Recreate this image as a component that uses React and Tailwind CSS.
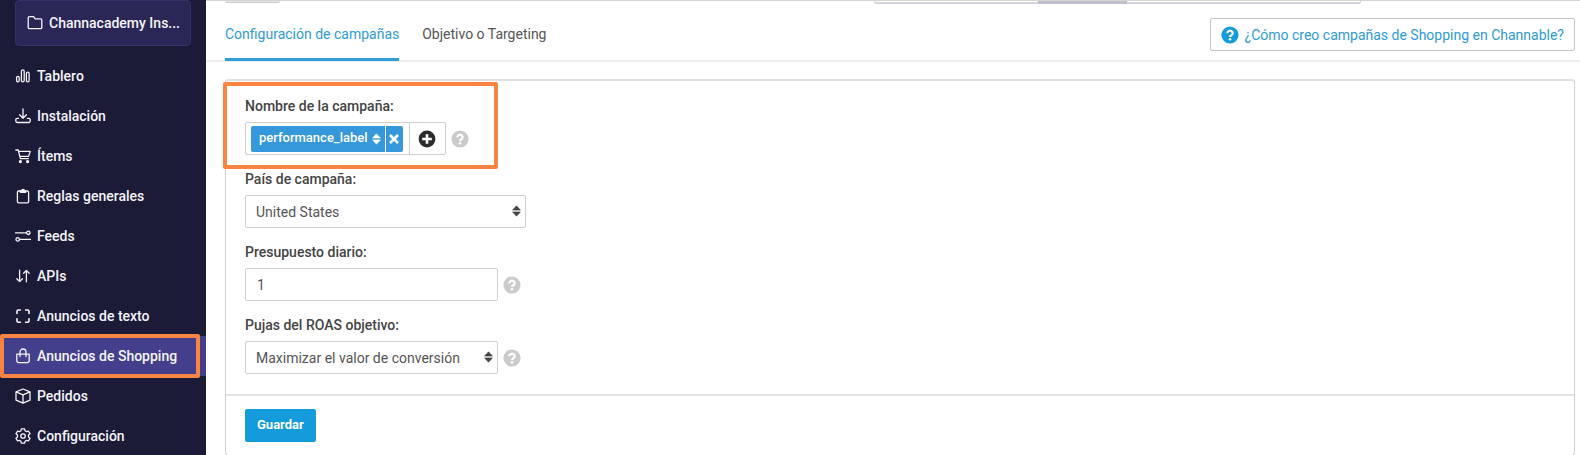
import React, { useState } from 'react';

const NAV = [
    { id: 'tablero',   name: 'Tablero',             icon: 'bars' },
    { id: 'instalar',  name: 'Instalación',         icon: 'download' },
    { id: 'items',     name: 'Ítems',               icon: 'cart' },
    { id: 'reglas',    name: 'Reglas generales',    icon: 'clipboard' },
    { id: 'feeds',     name: 'Feeds',               icon: 'sliders' },
    { id: 'apis',      name: 'APIs',                icon: 'arrows' },
    { id: 'texto',     name: 'Anuncios de texto',   icon: 'frame' },
    { id: 'shopping',  name: 'Anuncios de Shopping',icon: 'bag' },
    { id: 'pedidos',   name: 'Pedidos',             icon: 'box' },
    { id: 'config',    name: 'Configuración',       icon: 'gear' },
];

const PATHS = {
    folder: <path d="M1.2 3v9.400a1.300 1.300 0 0 0 1.300 1.300h11a1.300 1.300 0 0 0 1.300-1.300V5.200a1.300 1.300 0 0 0-1.300-1.300H8.200L6.600 1.700H2.500A1.300 1.300 0 0 0 1.200 3z" />,
    bars: (
        <>
            <rect x="1.6" y="8.3" width="2.6" height="5.6" rx="1.3" />
            <rect x="6.4" y="1.8" width="2.8" height="12.1" rx="1.4" />
            <rect x="11.4" y="4.2" width="2.7" height="9.7" rx="1.3" />
        </>
    ),
    download: (
        <>
            <path d="M8 1v9M4.6 6.8 8 10.2l3.4-3.4" />
            <path d="M3.6 10.4H2.2a1.4 1.4 0 0 0-1.4 1.4v1.3a1.4 1.4 0 0 0 1.4 1.4h11.6a1.4 1.4 0 0 0 1.4-1.4v-1.3a1.4 1.4 0 0 0-1.4-1.4h-1.4" />
        </>
    ),
    cart: (
        <>
            <path d="M.8 2h2.4l2.2 8.6h8M3.6 3.4h11.6l-1.6 5H4.9" />
            <circle cx="5.4" cy="13.6" r="1" fill="currentColor" />
            <circle cx="12.6" cy="13.6" r="1" fill="currentColor" />
        </>
    ),
    clipboard: (
        <>
            <path d="M5.4 3H3.6a1.2 1.2 0 0 0-1.2 1.2v9.4a1.2 1.2 0 0 0 1.2 1.2h8.8a1.2 1.2 0 0 0 1.2-1.2V4.2a1.2 1.2 0 0 0-1.2-1.2h-1.8" />
            <path d="M5.4 4.4V2.6h1.3a1.3 1.3 0 0 1 2.6 0h1.3v1.8z" fill="currentColor" />
        </>
    ),
    sliders: (
        <>
            <path d="M.5 4.8h11M4.5 11.4h11" />
            <circle cx="13.3" cy="4.8" r="1.7" />
            <circle cx="2.7" cy="11.4" r="1.7" />
        </>
    ),
    arrows: <path d="M4.6 2.2v11.4M1.8 10.8l2.8 2.8 2.8-2.8M11.4 13.8V2.4M8.6 5.2l2.8-2.8 2.8 2.8" />,
    frame: <path strokeWidth="1.6" d="M5.4 2H3.2A1.2 1.2 0 0 0 2 3.2v2.2M10.6 2h2.2A1.2 1.2 0 0 1 14 3.2v2.2M5.4 14.2H3.2A1.2 1.2 0 0 1 2 13v-2.2M10.6 14.2h2.2A1.2 1.2 0 0 0 14 13v-2.2" />,
    bag: (
        <>
            <path d="M1.8 6.2h12.4v6.6a1.8 1.8 0 0 1-1.8 1.8H3.600a1.800 1.800 0 0 1-1.800-1.800z" />
            <path d="M5 8.6V4a3 3 0 0 1 6 0v4.600" />
        </>
    ),
    box: <path d="M8 1 15 3.800v8.400L8 15.200 1 12.200V3.800zM1 3.800l7 3 7-3M8 6.800v8.400" />,
    gear: (
        <>
            <path d="M6.400.8h3.200l.5 2 1.300.8 2-.6 1.600 2.700L13.500 7.100v1.800l1.500 1.400-1.600 2.700-2-.6-1.300.8-.5 2H6.400l-.5-2-1.300-.8-2 .6L1 10.300l1.500-1.400V7.100L1 5.700 2.600 3l2 .6 1.300-.8z" />
            <circle cx="8" cy="8" r="2.200" />
        </>
    ),
};

function Icon({ name }) {
    return (
        <svg viewBox="0 0 16 16" className="w-4 h-4 shrink-0" fill="none" stroke="currentColor" strokeWidth="1.3" strokeLinecap="round" strokeLinejoin="round" aria-hidden="true">
            {PATHS[name]}
        </svg>
    );
}

function SortIcon({ className = '' }) {
    return (
        <svg viewBox="0 0 9 12" className={`w-[9px] h-3 ${className}`} fill="currentColor" stroke="currentColor" strokeWidth=".6" strokeLinejoin="round" aria-hidden="true">
            <path d="M4.500.8 8.400 5.100H.6zM4.500 11.200.6 6.900h7.800z" />
        </svg>
    );
}

function QuestionIcon({ className }) {
    return (
        <svg viewBox="0 0 18 18" className={className} aria-hidden="true">
            <circle cx="9" cy="9" r="8.6" fill="currentColor" />
            <path d="M6.300 7.200a2.700 2.400 0 1 1 4.100 2c-1 .6-1.400.8-1.400 1.700" fill="none" stroke="#fff" strokeWidth="2.200" />
            <circle cx="9" cy="13.200" r="1.300" fill="#fff" />
        </svg>
    );
}

function HelpButton({ label }) {
    return (
        <button type="button" aria-label={label} className="ml-[5px] text-[#cbcbcb] cursor-pointer">
            <QuestionIcon className="w-[18px] h-[18px]" />
        </button>
    );
}

function SelectField({ id, label, options, className, help }) {
    return (
        <div>
            <label htmlFor={id} className="block mb-1.5 leading-5 font-medium">{label}</label>
            <div className="flex items-center">
                <div className={`relative ${className}`}>
                    <select id={id} className="block w-full h-[33px] px-2.5 appearance-none bg-white border border-[#cfcfcf] rounded-xs text-[#555]">
                        {options.map(o => <option key={o}>{o}</option>)}
                    </select>
                    <SortIcon className="absolute right-[5px] top-2.5 pointer-events-none" />
                </div>
                {help && <HelpButton label={help} />}
            </div>
        </div>
    );
}

export default function ShoppingCampaign() {
    const [active, setActive] = useState('shopping');
    const [budget, setBudget] = useState('1');

    return (
        <div className="flex min-h-screen bg-white font-[Roboto,sans-serif] text-sm text-[#444]">
            <aside className="w-[206px] shrink-0 bg-[#1b1a37] text-[#f4f4f8] font-medium">
                <button type="button" className="flex items-center gap-1.5 w-44 h-[46px] ml-[15px] mb-2.5 pl-[11px] bg-[#2a2756] border border-[#35316a] rounded-sm whitespace-nowrap cursor-pointer">
                    <Icon name="folder" />
                    Channacademy Ins...
                </button>
                <nav>
                    {NAV.map(item => (
                        <div key={item.id} className="relative">
                            <a
                                href={`#${item.id}`}
                                onClick={() => setActive(item.id)}
                                className={`flex items-center gap-1.5 h-10 pl-[15px] ${item.id === active ? 'bg-[#443f8c]' : ''}`}
                            >
                                <Icon name={item.icon} />
                                {item.name}
                            </a>
                            {item.id === 'shopping' && (
                                <div className="absolute left-0 right-1.5 -inset-y-0.5 border-4 border-[#fa8540] rounded-xs pointer-events-none" />
                            )}
                        </div>
                    ))}
                </nav>
            </aside>

            <main className="flex-1 min-w-0 flex flex-col">
                {/* Lower edge of the toolbar */}
                <div className="flex justify-between items-start h-1 pl-[19px] pr-[219px] border-t border-[#d5d5d5]">
                    <div className="w-[55px] h-0.5 bg-[#e6e6e6] border-b border-[#c8c8c8] rounded-b-xs" />
                    <div className="flex justify-center w-[487px] h-[3px] border-x border-b-2 border-[#d4d3dc] rounded-b-xs">
                        <div className="w-[89px] h-[3px] -ml-[70px] bg-[#c1bfcc]" />
                    </div>
                </div>

                <div className="flex items-start justify-between h-[58px] pl-[19px] pr-[5px] border-b-2 border-[#ededed]">
                    <div className="flex gap-[23px]">
                        <a href="#configuracion" className="h-[57px] pt-5 leading-5 text-[#2e9bd6] border-b-3 border-[#2e9fd6]">Configuración de campañas</a>
                        <a href="#objetivo" className="h-[57px] pt-5 leading-5 text-[#555]">Objetivo o Targeting</a>
                    </div>
                    <a href="#ayuda" className="flex items-center gap-1.5 h-[33px] mt-3.5 px-2.5 border border-[#c4c3cd] rounded-xs text-[#2e9bd6]">
                        <QuestionIcon className="w-[18px] h-[18px] text-[#139bdb]" />
                        ¿Cómo creo campañas de Shopping en Channable?
                    </a>
                </div>

                <form className="flex-1 ml-[19px] mr-[5px] mt-[17px] border border-[#cfcfcf] border-t-2 border-t-[#e3e3e3] rounded-sm" onSubmit={e => e.preventDefault()}>
                    <div className="flex flex-col gap-3.5 px-[19px] pt-[15px] pb-5 border-b-2 border-[#e3e3e3]">
                        <div className="relative self-start">
                            <div id="nombre" className="mb-1.5 leading-5 font-medium">Nombre de la campaña:</div>
                            <div className="flex items-center" role="group" aria-labelledby="nombre">
                                <div className="flex h-[33px] border border-[#cfcfcf] rounded-xs">
                                    <div className="flex items-center gap-px pl-[5px] pr-1.5 text-[13px] font-medium text-white">
                                        <button type="button" className="flex items-center gap-1 h-[26px] pl-2 pr-1 bg-[#3498db] rounded-l-xs cursor-pointer">
                                            performance_label
                                            <SortIcon />
                                        </button>
                                        <button type="button" aria-label="Quitar" className="flex items-center justify-center w-[17px] h-[26px] bg-[#3498db] rounded-r-xs cursor-pointer">
                                            <svg viewBox="0 0 10 10" className="w-2.5 h-2.5" stroke="currentColor" strokeWidth="2.6"><path d="m1 1 8 8M9 1 1 9" /></svg>
                                        </button>
                                    </div>
                                    <button type="button" aria-label="Añadir" className="flex items-center justify-center w-9 border-l border-[#cfcfcf] cursor-pointer">
                                        <svg viewBox="0 0 18 18" className="w-[18px] h-[18px]">
                                            <circle cx="9" cy="9" r="8.4" fill="#2d2d2d" />
                                            <path d="M9 4.2v9.6M4.2 9h9.6" stroke="#fff" strokeWidth="2.6" />
                                        </svg>
                                    </button>
                                </div>
                                <HelpButton label="Ayuda: nombre" />
                            </div>
                            <div className="absolute -left-[22px] -right-[29px] -top-3.5 -bottom-3.5 border-4 border-[#fa8540] rounded-xs pointer-events-none" />
                        </div>

                        <SelectField id="pais" label="País de campaña:" options={['United States', 'España']} className="w-[281px]" />

                        <div>
                            <label htmlFor="presupuesto" className="block mb-1.5 leading-5 font-medium">Presupuesto diario:</label>
                            <div className="flex items-center">
                                <input
                                    id="presupuesto"
                                    type="text"
                                    value={budget}
                                    onChange={e => setBudget(e.target.value)}
                                    className="w-[253px] h-[33px] px-[11px] border border-[#cfcfcf] rounded-xs text-[#555]"
                                />
                                <HelpButton label="Ayuda: presupuesto" />
                            </div>
                        </div>

                        <SelectField id="pujas" label="Pujas del ROAS objetivo:" options={['Maximizar el valor de conversión', 'ROAS objetivo']} className="w-[253px]" help="Ayuda: pujas" />
                    </div>

                    <div className="px-[19px] pt-[13px] pb-3">
                        <button type="submit" className="h-[33px] px-3 bg-[#139bdb] rounded-xs text-[13px] font-bold text-white cursor-pointer">Guardar</button>
                    </div>
                </form>
            </main>
        </div>
    );
}
